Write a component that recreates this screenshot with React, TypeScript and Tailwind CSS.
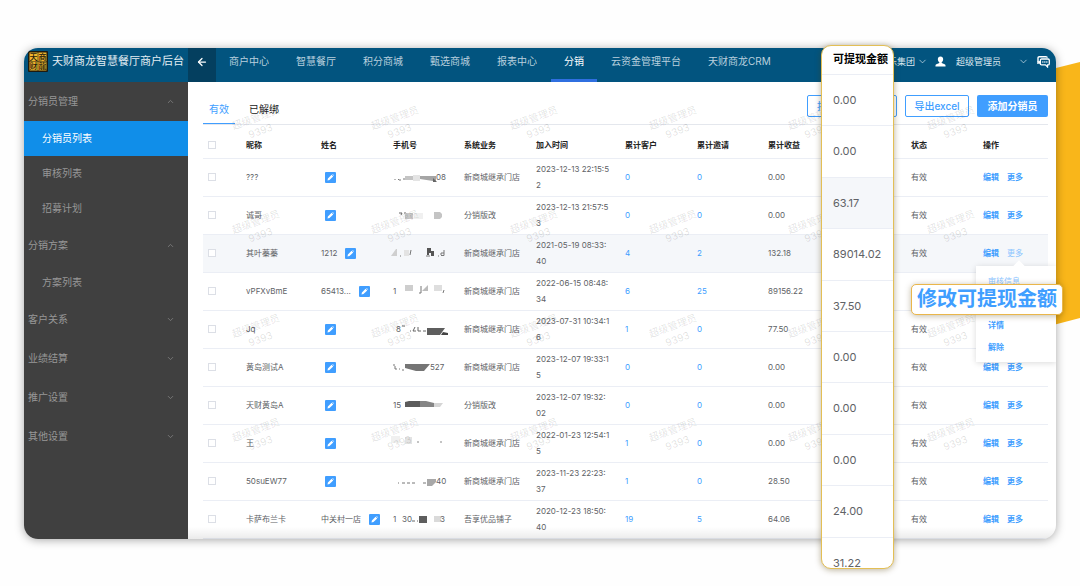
import type { ReactNode } from 'react';
import { clsx } from 'clsx';
import { ArrowLeft, ChevronDown, ChevronUp } from 'lucide-react';

const menu = [
  { title: '分销员管理', children: ['分销员列表', '审核列表', '招募计划'] },
  { title: '分销方案', children: ['方案列表'] },
  { title: '客户关系', children: [] },
  { title: '业绩结算', children: [] },
  { title: '推广设置', children: [] },
  { title: '其他设置', children: [] },
];

const topNav = ['商户中心', '智慧餐厅', '积分商城', '甄选商城', '报表中心', '分销', '云资金管理平台', '天财商龙CRM'];

// phone numbers are masked with grey mosaic blocks
const phones: ReactNode[] = [
  <>
    <path d="M5 9v1M8 9l1 1h2M13 9h2" stroke="#777" fill="none" />
    <path d="M15 6h8v4h-8z" fill="#c4c4c4" />
    <path d="M23 5h7v6h-7z" fill="#e4e4e4" />
    <path d="M30 6h16v5h-3l-13-2z" fill="#a5a5a5" />
    <path d="M43 8l4 4h-4z" fill="#666" />
    <text x="46" y="10">08</text>
  </>,
  <>
    <path d="M9 5h3M11 7l1-2M14 5h2" stroke="#666" fill="none" />
    <path d="M15 5h8v6h-8z" fill="#c8c8c8" />
    <path d="M24 5h9v6h-9z" fill="#f0f0f0" />
    <path d="M44 4h6l2 2v3l-2 2h-6z" fill="#c4c4c4" />
  </>,
  <>
    <path d="M1 10l5-7h1v7z" fill="#cfcfcf" />
    <path d="M10 10h1M21 4l-1 5" stroke="#777" fill="none" />
    <path d="M14 4h5v6h-5z" fill="#e3e3e3" />
    <path d="M37 2h4v3h3v5h-3V7h-2v2h-2z" fill="#555" />
    <path d="M36 10h4M48 10h1M51 9.500h3V4M51 9V7h3" stroke="#777" fill="none" />
  </>,
  <>
    <text x="3" y="10">1</text>
    <path d="M15 1h8v6h-8z" fill="#cecece" />
    <path d="M29 9h2V2" stroke="#777" fill="none" />
    <path d="M32 7l6-6v6z" fill="#bcbcbc" />
    <path d="M44 1h8v6h-8z" fill="#dedede" />
    <path d="M54 6l-1 3" stroke="#777" />
  </>,
  <>
    <text x="6" y="10">8</text>
    <path d="M12 4h3M20 9h1M25 5l-2 4h3M28 5v4h3M33 9h3" stroke="#666" fill="none" />
    <path d="M37 6h18l-5 7H37z" fill="#5e5e5e" />
    <path d="M53 10l5 1v2h-7z" fill="#444" />
  </>,
  <>
    <path d="M3 5h2M5 6v3h2M9 9h1M12 10h2" stroke="#777" fill="none" />
    <path d="M15 4h25l-6 7H26L15 8z" fill="#757575" />
    <text x="40" y="10">527</text>
  </>,
  <>
    <text x="3" y="10">15</text>
    <path d="M15 4l4-1h11v6H15z" fill="#5c5c5c" />
    <path d="M30 3h6l8 2v4H30z" fill="#858585" />
    <path d="M44 5h9l-3 4h-6z" fill="#d5d5d5" />
  </>,
  <>
    <path d="M1 0h9v7H1z" fill="#f0f0f0" />
    <path d="M15 1h7v7h-7z" fill="#e3e3e3" />
    <path d="M27 6h2M51 5v2" stroke="#888" />
  </>,
  <>
    <path d="M8 9h1M12 9h3M17 9h3M22 9h3M33 9h3" stroke="#777" />
    <path d="M37 5h9v3l-4 4h-5z" fill="#a8a8a8" />
    <text x="46" y="10">40</text>
  </>,
  <>
    <text x="3" y="10">1</text>
    <text x="12" y="10">30</text>
    <path d="M22 9h3M27 9h1" stroke="#666" />
    <path d="M29 4h8v7h-8z" fill="#5e5e5e" />
    <path d="M44 4h7v6h-7z" fill="#dadada" />
    <text x="50" y="10">3</text>
  </>,
];

const rows = [
  { nick: '???', name: '', biz: '新商城继承门店', time: ['2023-12-13 22:15:5', '2'], clients: 0, invites: 0, income: '0.00' },
  { nick: '诚哥', name: '', biz: '分销版改', time: ['2023-12-13 21:57:5', '3'], clients: 0, invites: 0, income: '0.00' },
  { nick: '其叶蓁蓁', name: '1212', biz: '新商城继承门店', time: ['2021-05-19 08:33:', '40'], clients: 4, invites: 2, income: '132.18' },
  { nick: 'vPFXvBmE', name: '65413...', biz: '新商城继承门店', time: ['2022-06-15 08:48:', '34'], clients: 6, invites: 25, income: '89156.22' },
  { nick: 'Jq', name: '', biz: '新商城继承门店', time: ['2023-07-31 10:34:1', '6'], clients: 1, invites: 0, income: '77.50' },
  { nick: '黄岛测试A', name: '', biz: '新商城继承门店', time: ['2023-12-07 19:33:1', '5'], clients: 0, invites: 0, income: '0.00' },
  { nick: '天财黄岛A', name: '', biz: '分销版改', time: ['2023-12-07 19:32:', '02'], clients: 0, invites: 0, income: '0.00' },
  { nick: '王', name: '', biz: '新商城继承门店', time: ['2022-01-23 12:54:1', '5'], clients: 1, invites: 0, income: '0.00' },
  { nick: '50suEW77', name: '', biz: '新商城继承门店', time: ['2023-11-23 22:23:', '37'], clients: 1, invites: 0, income: '28.50' },
  { nick: '卡萨布兰卡', name: '中关村一店', biz: '吾享优品铺子', time: ['2020-12-23 18:50:', '40'], clients: 19, invites: 5, income: '64.06' },
];

const amounts = ['0.00', '0.00', '63.17', '89014.02', '37.50', '0.00', '0.00', '0.00', '24.00', '31.22'];

// the empty header belongs to the column that is shown enlarged
const headers = ['昵称', '姓名', '手机号', '系统业务', '加入时间', '累计客户', '累计邀请', '累计收益', '', '状态', '操作'];

function Logo() {
  return (
    <svg viewBox="0 0 20 21" className="h-[21px] w-5 shrink-0" aria-hidden="true">
      <rect width="20" height="21" rx="1" fill="#1d1a10" />
      <path d="M1.500 1.500h8.200v8.700H1.500zM10.300 1.500h8.200v8.700h-8.200zM1.500 10.800h8.200v8.700H1.500zM10.300 10.800h8.200v8.700h-8.200z" fill="#f0b52c" />
      <g fontSize="8" fontWeight="500" fill="#1d1a10" textAnchor="middle">
        <text x="5.600" y="8.800">天</text>
        <text x="14.400" y="8.800">商</text>
        <text x="5.600" y="18.200">财</text>
        <text x="14.400" y="18.200">龍</text>
      </g>
    </svg>
  );
}

function TopBar() {
  return (
    <header className="flex h-[34px] bg-[#02547f] text-[10px] text-[#b9d0de]">
      <div className="flex w-[164px] shrink-0 items-start gap-1 pt-[3px] pl-1 text-[11px] text-[#e3edf3]">
        <Logo />
        <span className="leading-[21px] whitespace-nowrap">天财商龙智慧餐厅商户后台</span>
      </div>
      <button className="flex w-7 shrink-0 items-start justify-center bg-[#043f5f] pt-2 text-white" aria-label="返回">
        <ArrowLeft className="size-3" strokeWidth={2.5} />
      </button>
      <nav className="flex gap-px">
        {topNav.map((item) => (
          <a
            key={item}
            href="#"
            className={clsx(
              'border-b-3 px-[13px] leading-[27px] whitespace-nowrap',
              item === '分销' ? 'border-[#2f6fe0] text-white' : 'border-transparent'
            )}
          >
            {item}
          </a>
        ))}
      </nav>
      <div className="ml-auto flex h-[27px] shrink-0 items-center pr-[6px] text-[9px] text-[#dce8ef]">
        <span>永乐集团</span>
        <ChevronDown className="ml-[2px] size-[11px]" strokeWidth={1.5} />
        <svg viewBox="0 0 12 12" className="ml-[7px] size-[11px]" fill="#fff">
          <path d="M6 .5c-1.900 0-2.900 1.300-2.900 3 0 1.400.7 2.700 1.600 3.300v.8L1.500 9c-.7.3-1 .9-1 1.600v.9h11v-.9c0-.7-.3-1.300-1-1.600L7.300 7.600v-.8c.9-.6 1.600-1.900 1.600-3.300 0-1.700-1-3-2.900-3z" />
        </svg>
        <span className="ml-[10px]">超级管理员</span>
        <ChevronDown className="ml-[17px] size-[11px]" strokeWidth={1.5} />
        <svg viewBox="0 0 13 12" className="ml-2 h-3 w-[13px]" fill="none" stroke="#fff">
          <path d="M1 8V2c0-.8.500-1.300 1.300-1.300h6.600c.8 0 1.300.4 1.300 1" strokeWidth="1.400" />
          <path d="M0 5.500l3 2.800V5z" fill="#fff" stroke="none" />
          <path d="M4.600 3h6.500c.8 0 1.200.5 1.200 1.200v3.500c0 .8-.4 1.200-1.200 1.200h-.6v2L8.400 8.900H4.600c-.8 0-1.200-.4-1.200-1.200V4.200c0-.7.4-1.200 1.200-1.200z" strokeWidth="1.300" />
          <path d="M5.300 6h1.100M7.300 6h1.100M9.300 6h1.100" strokeWidth="1.300" />
        </svg>
      </div>
    </header>
  );
}

function Sidebar() {
  return (
    <aside className="w-[164px] shrink-0 bg-[#404040] text-[10px] text-[#979797]">
      {menu.map((group) => {
        const Chevron = group.children.length ? ChevronUp : ChevronDown;
        return (
          <div key={group.title}>
            <button className="flex h-[39px] w-full items-center justify-between pr-[13px] pl-1">
              {group.title}
              <Chevron className="size-[9px] text-[#858585]" strokeWidth={2} />
            </button>
            {group.children.map((child) => (
              <a
                key={child}
                href="#"
                className={clsx(
                  'flex h-[35px] items-center pl-[18px]',
                  child === '分销员列表' && 'bg-[#108ee9] text-white'
                )}
              >
                {child}
              </a>
            ))}
          </div>
        );
      })}
    </aside>
  );
}

function EditButton({ hasName }: { hasName: boolean }) {
  return (
    <button className={clsx('flex size-[11px] items-center justify-center rounded-[1px] bg-[#409eff]', hasName ? 'ml-2' : 'ml-1')} aria-label="修改姓名">
      <svg viewBox="0 0 11 11" className="size-[11px]" fill="#fff">
        <path d="M6.600 2.800l1.600 1.600-3.700 3.700-2 .4.4-2zM7.200 2.300l.5-.4 1.500 1.500-.5.4z" />
      </svg>
    </button>
  );
}

function DistributorTable() {
  return (
    <table className="w-full table-fixed text-left text-[8px] text-[#606266]">
      <colgroup>
        <col className="w-[37px]" />
        <col className="w-[75px]" />
        <col className="w-[72px]" />
        <col className="w-[71px]" />
        <col className="w-[72px]" />
        <col className="w-[89px]" />
        <col className="w-[72px]" />
        <col className="w-[71px]" />
        <col className="w-[72px]" />
        <col className="w-[71px]" />
        <col className="w-[72px]" />
        <col className="w-[71px]" />
      </colgroup>
      <thead>
        <tr className="h-[33px] border-b border-[#ebeef5] text-[#222]">
          <th className="pt-2 pl-[5px]">
            <input type="checkbox" aria-label="全选" className="block size-2 appearance-none border border-[#dcdfe6] bg-white" />
          </th>
          {headers.map((h, i) => (
            <th key={i} className="pt-2 pl-[6px] font-bold">{h}</th>
          ))}
        </tr>
      </thead>
      <tbody>
        {rows.map((row, i) => (
          <tr key={row.nick} className={clsx('h-[38px] border-b border-[#ebeef5]', i === 2 && 'bg-[#f5f7fa]')}>
            <td className="pl-[5px]">
              <input type="checkbox" aria-label={row.nick} className="block size-2 appearance-none border border-[#dcdfe6] bg-white" />
            </td>
            <td className="pl-[6px]">{row.nick}</td>
            <td className="pl-[6px]">
              <div className="flex items-center whitespace-nowrap">
                {row.name}
                <EditButton hasName={row.name !== ''} />
              </div>
            </td>
            <td className="pl-[3px]">
              <svg viewBox="0 0 64 14" className="h-[14px] w-16" fill="#606266" fontSize="8">
                {phones[i]}
              </svg>
            </td>
            <td className="pl-[6px] whitespace-nowrap">{row.biz}</td>
            <td className="pl-[6px] leading-4 whitespace-nowrap">
              {row.time[0]}
              <br />
              {row.time[1]}
            </td>
            <td className="pl-[6px] text-[#409eff]">{row.clients}</td>
            <td className="pl-[6px] text-[#409eff]">{row.invites}</td>
            <td className="pl-[6px]">{row.income}</td>
            <td />
            <td className="pl-[6px]">有效</td>
            <td className="pl-[6px]">
              <div className="flex gap-2 font-semibold text-[#409eff]">
                <button>编辑</button>
                <button className={clsx(i === 2 && 'font-normal text-[#8cc5ff]')}>更多</button>
              </div>
            </td>
          </tr>
        ))}
      </tbody>
    </table>
  );
}

function Watermarks() {
  return (
    <div className="pointer-events-none absolute top-6 left-[164px] grid grid-cols-[repeat(6,139px)] text-[10px] leading-[14px] text-black/12" aria-hidden="true">
      {Array.from({ length: 24 }, (_, i) => (
        <div key={i} className="flex h-[104px] items-center justify-center">
          <div className="-rotate-20 text-center">
            超级管理员
            <br />
            9393
          </div>
        </div>
      ))}
    </div>
  );
}

export default function App() {
  return (
    <div className="relative min-h-screen overflow-hidden bg-[#fefefe] px-6 pt-12 pb-11 font-['Inter','Noto_Sans_CJK_SC',sans-serif]">
      <svg viewBox="0 0 80 270" className="absolute top-[60px] right-0 h-[270px] w-20" aria-hidden="true">
        <path d="M0 22L80 2v256L0 279z" fill="#f9b61a" />
      </svg>

      <div className="relative">
        <div className="relative overflow-hidden rounded-[14px] bg-white shadow-[0_1px_10px_rgba(0,0,0,0.35)]">
          <TopBar />
          <div className="flex">
            <Sidebar />
            <main className="min-w-0 flex-1 pt-[13px] pr-2 pl-[15px]">
              <div className="flex items-start border-b border-[#e4e7ed] text-[10px]">
                <button className="-mb-px h-[29px] border-b border-[#409eff] px-[6px] text-[#409eff]">有效</button>
                <button className="ml-[10px] h-[29px] px-1 text-[#222]">已解绑</button>
                <div className="ml-auto flex gap-2 font-medium">
                  <button className="h-[22px] w-[90px] rounded-[2px] border border-[#409eff] text-[#409eff]">批量导入分销员</button>
                  <button className="h-[22px] w-16 rounded-[2px] border border-[#409eff] text-[#409eff]">导出excel</button>
                  <button className="h-[22px] w-[71px] rounded-[2px] bg-[#409eff] font-semibold text-white">添加分销员</button>
                </div>
              </div>
              <DistributorTable />
            </main>
          </div>
          <Watermarks />
          <div className="pointer-events-none absolute right-0 bottom-0 left-[164px] h-3 bg-linear-to-b from-transparent to-black/8" />

          <div className="absolute top-[218px] right-0 flex h-24 w-20 flex-col bg-white pt-1 pl-3 text-[8px] font-semibold text-[#409eff] shadow-[0_1px_6px_rgba(0,0,0,0.15)]">
            <span className="absolute -top-1 left-[39px] size-2 rotate-45 bg-white" />
            <button className="relative h-[22px] text-left font-normal text-[#8cc5ff]">审核信息</button>
            <button className="mt-[22px] h-[22px] text-left">详情</button>
            <button className="h-[22px] text-left">解除</button>
          </div>
        </div>

        <section className="absolute -top-[3px] right-[162px] flex h-[524px] w-[73px] flex-col overflow-hidden rounded-[10px] border border-[#e3bf55] bg-white text-[11px] text-[#606266] shadow-[0_1px_6px_rgba(80,60,0,0.4)]">
          <h2 className="h-[29px] shrink-0 border-b border-[#ebeef5] pl-[11px] leading-[27px] font-bold whitespace-nowrap text-black">可提现金额</h2>
          <div className="flex min-h-[514px] flex-col">
            {amounts.map((amount, i) => (
              <div key={i} className={clsx('flex flex-1 items-center border-b border-[#ebeef5] pl-[11px]', i === 2 && 'bg-[#f5f7fa]')}>
                {amount}
              </div>
            ))}
          </div>
        </section>

        <button className="absolute top-[236px] -right-[7px] h-[31px] rounded-[5px] border border-[#eab64a] bg-white px-[5px] text-[20px] leading-[29px] font-semibold whitespace-nowrap text-[#409eff] shadow-[0_1px_6px_rgba(80,60,0,0.35)]">
          修改可提现金额
        </button>
      </div>
    </div>
  );
}
